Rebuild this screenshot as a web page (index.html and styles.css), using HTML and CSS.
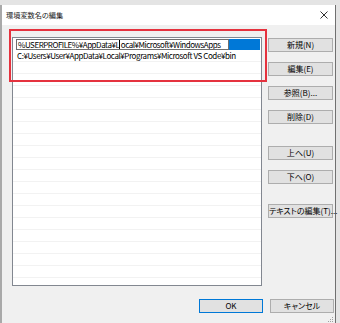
FILE: index.html
```html
<!DOCTYPE html>
<html>
<head>
<meta charset="utf-8">
<title>環境変数名の編集</title>
<link rel="stylesheet" href="styles.css">
</head>

<body>
  <div class="window">
    <div class="titlebar">
      <span class="title">環境変数名の編集</span>
      <svg class="close" width="8" height="8" viewBox="0 0 8 8">
        <path d="M0.5 0.5 L7.5 7.5 M7.5 0.5 L0.5 7.5" stroke="#1a1a1a" stroke-width="0.9" fill="none" />
      </svg>
    </div>

    <div class="content">
      <div class="main">
        <div class="list">
          <div class="row row-selected">
            <div class="editor">%USERPROFILE%¥AppData¥L<span class="caret"></span>ocal¥Microsoft¥WindowsApps</div>
          </div>
          <div class="row">C:¥Users¥User¥AppData¥Local¥Programs¥Microsoft VS Code¥bin</div>
          <div class="row"></div>
          <div class="row"></div>
          <div class="row"></div>
          <div class="row"></div>
          <div class="row"></div>
          <div class="row"></div>
          <div class="row"></div>
          <div class="row"></div>
          <div class="row"></div>
          <div class="row"></div>
          <div class="row"></div>
          <div class="row"></div>
          <div class="row"></div>
          <div class="row"></div>
          <div class="row"></div>
          <div class="row"></div>
          <div class="row"></div>
          <div class="row"></div>
          <div class="row"></div>
        </div>

        <div class="side">
          <button class="btn">新規(N)</button>
          <button class="btn">編集(E)</button>
          <button class="btn">参照(B)...</button>
          <button class="btn">削除(D)</button>
          <button class="btn gap-lg">上へ(U)</button>
          <button class="btn">下へ(O)</button>
          <button class="btn gap-md">テキストの編集(T)...</button>
        </div>
      </div>

      <div class="footer">
        <button class="btn btn-default">OK</button>
        <button class="btn">キャンセル</button>
      </div>
    </div>

    <div class="highlight"></div>

    <svg class="grip" width="6" height="6" viewBox="0 0 6 6">
      <rect x="4" y="0" width="1" height="1" fill="#a0a0a0" />
      <rect x="2" y="2" width="1" height="1" fill="#a0a0a0" />
      <rect x="4" y="2" width="1" height="1" fill="#a0a0a0" />
      <rect x="0" y="4" width="1" height="1" fill="#a0a0a0" />
      <rect x="2" y="4" width="1" height="1" fill="#a0a0a0" />
      <rect x="4" y="4" width="1" height="1" fill="#a0a0a0" />
    </svg>
  </div>
</body>
</html>
```

FILE: styles.css
```css
body {
  margin: 0;
  background-color: #e4e4e4;
  font-family: "Noto Sans CJK JP", "Noto Sans", sans-serif;
  font-feature-settings: "palt";
  font-size: 8px;
  color: #000;
  overflow: hidden;
}

.window {
  position: relative;
  margin: 5px 0 0 2px;
  width: 333px;
  height: 318px;
  background-color: #f0f0f0;
  border-right: 1px solid #707070;
  box-shadow: -2px 0 0 #a9a9a9;
}

.titlebar {
  height: 20px;
  background-color: #fff;
  display: flex;
  align-items: center;
  justify-content: space-between;
  padding: 0 7px 0 4px;
}

.title {
  font-size: 7.2px;
  color: #1a1a1a;
}

.content {
  padding: 12px 1px 0 10px;
}

.main {
  display: flex;
  gap: 6px;
}

.list {
  width: 250px;
  height: 249px;
  box-sizing: border-box;
  border: 1px solid #828790;
  background-color: #fff;
  overflow: hidden;
}

.row {
  height: 12px;
  box-sizing: border-box;
  border-bottom: 1px solid #f2f2f2;
  padding-left: 4px;
  line-height: 11px;
  letter-spacing: -0.42px;
  white-space: nowrap;
  overflow: hidden;
}

.row-selected {
  padding: 1px 1px 0 3px;
  border-bottom: none;
}

.row-selected .editor {
  height: 11px;
  box-sizing: border-box;
  width: 213px;
  border: 1px solid #6f6f6f;
  background-color: #fff;
  box-shadow: 31px 0 0 #0078d7;
  padding-left: 1px;
  line-height: 9px;
  letter-spacing: -0.47px;
  overflow: hidden;
}

.caret {
  display: inline-block;
  width: 1px;
  height: 9px;
  margin-right: 0.5px;
  background-color: #000;
  vertical-align: -1px;
}

.side {
  display: flex;
  flex-direction: column;
  width: 65px;
  padding-top: 1px;
}

.btn {
  width: 65px;
  height: 14px;
  box-sizing: border-box;
  padding: 0;
  background-color: #e1e1e1;
  border: 1px solid #adadad;
  font-family: inherit;
  font-feature-settings: "palt";
  font-size: 8px;
  line-height: 12px;
  color: #000;
  white-space: nowrap;
}

.btn + .btn {
  margin-top: 10px;
}

.side .gap-lg {
  margin-top: 22px;
}

.side .gap-md {
  margin-top: 20px;
}

.footer {
  display: flex;
  justify-content: flex-end;
  gap: 7px;
  margin-top: 13px;
}

.footer .btn {
  width: 64px;
}

.footer .btn + .btn {
  margin-top: 0;
}

.btn-default {
  border-color: #0078d7;
}

.highlight {
  position: absolute;
  left: 7px;
  top: 24px;
  width: 254px;
  height: 49px;
  border: 2px solid #e5323e;
}

.grip {
  position: absolute;
  right: 1px;
  bottom: 0;
}
```
